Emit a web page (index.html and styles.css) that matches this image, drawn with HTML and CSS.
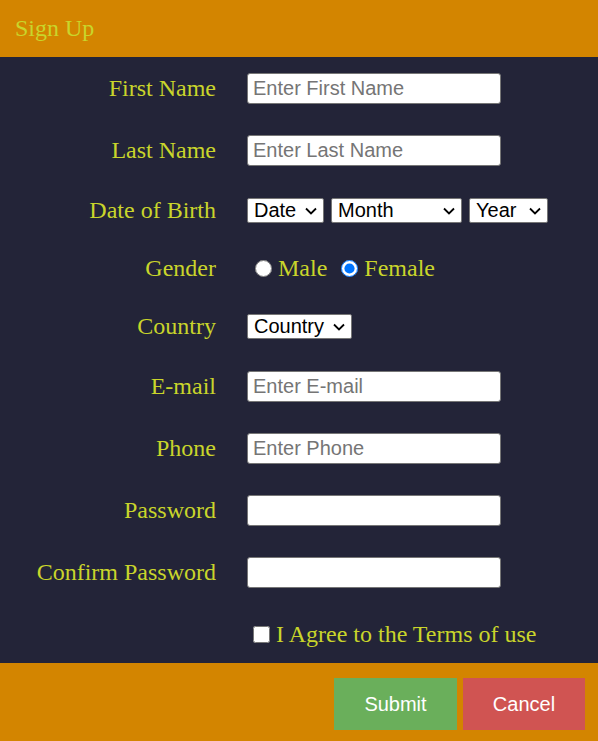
FILE: index.html
```html
<!DOCTYPE html>
<html>
<head>
<meta charset="utf-8">
<link rel="stylesheet" href="styles.css">
</head>
<body>
<header class="top">Sign Up</header>
<form class="form">
  <div class="row">
    <label class="label">First Name</label>
    <div class="field"><input class="text" type="text" placeholder="Enter First Name"></div>
  </div>
  <div class="row">
    <label class="label">Last Name</label>
    <div class="field"><input class="text" type="text" placeholder="Enter Last Name"></div>
  </div>
  <div class="row">
    <label class="label">Date of Birth</label>
    <div class="field selects">
      <span class="selwrap">
        <select class="sel sel-date"><option>Date</option><option>1</option><option>2</option><option>3</option><option>10</option><option>31</option></select>
        <svg class="chev" viewBox="0 0 12 8" width="12" height="8"><path d="M1 1.5 L6 6.5 L11 1.5" /></svg>
      </span>
      <span class="selwrap">
        <select class="sel sel-month"><option>Month</option><option>January</option><option>February</option><option>March</option><option>September</option><option>December</option></select>
        <svg class="chev" viewBox="0 0 12 8" width="12" height="8"><path d="M1 1.5 L6 6.5 L11 1.5" /></svg>
      </span>
      <span class="selwrap">
        <select class="sel sel-year"><option>Year</option><option>2000</option><option>2001</option><option>2002</option></select>
        <svg class="chev" viewBox="0 0 12 8" width="12" height="8"><path d="M1 1.5 L6 6.5 L11 1.5" /></svg>
      </span>
    </div>
  </div>
  <div class="row">
    <label class="label">Gender</label>
    <div class="field radios">
      <label class="opt"><input class="radio" type="radio" name="g">Male</label>
      <label class="opt opt-second"><input class="radio" type="radio" name="g" checked>Female</label>
    </div>
  </div>
  <div class="row">
    <label class="label">Country</label>
    <div class="field">
      <span class="selwrap">
        <select class="sel sel-country"><option>Country</option><option>India</option><option>USA</option><option>UK</option></select>
        <svg class="chev" viewBox="0 0 12 8" width="12" height="8"><path d="M1 1.5 L6 6.5 L11 1.5" /></svg>
      </span>
    </div>
  </div>
  <div class="row">
    <label class="label">E-mail</label>
    <div class="field"><input class="text" type="text" placeholder="Enter E-mail"></div>
  </div>
  <div class="row">
    <label class="label">Phone</label>
    <div class="field"><input class="text" type="text" placeholder="Enter Phone"></div>
  </div>
  <div class="row">
    <label class="label">Password</label>
    <div class="field"><input class="text" type="password"></div>
  </div>
  <div class="row">
    <label class="label">Confirm Password</label>
    <div class="field"><input class="text" type="password"></div>
  </div>
  <div class="row row-terms">
    <span class="label"></span>
    <div class="field"><label class="opt terms"><input class="check" type="checkbox">I Agree to the Terms of use</label></div>
  </div>
</form>
<footer class="bottom">
  <button class="btn btn-submit" type="button">Submit</button>
  <button class="btn btn-cancel" type="button">Cancel</button>
</footer>
</body>
</html>
```
FILE: styles.css
```css
html, body {
  margin: 0;
  padding: 0;
}
body {
  background: #232438;
  font-family: "Liberation Serif", "Times New Roman", serif;
  color: #c9d52b;
  width: 598px;
}
.top {
  height: 57px;
  background: #d38500;
  display: flex;
  align-items: center;
  padding-left: 15px;
  font-size: 24px;
  color: #c9d52b;
}
.form {
  display: flex;
  flex-direction: column;
}
.row {
  display: flex;
  align-items: center;
  padding: 15.5px 0;
}
.row-terms {
  padding: 17.5px 0 15.5px;
}
.label {
  width: 216px;
  flex: none;
  text-align: right;
  font-size: 24px;
}
.field {
  margin-left: 31px;
  display: flex;
  align-items: center;
}
.text {
  box-sizing: border-box;
  width: 254px;
  height: 31px;
  border: 1px solid #767676;
  border-radius: 3px;
  padding: 0 5px;
  font-family: "Liberation Sans", Arial, sans-serif;
  font-size: 20px;
  background: #fff;
  color: #000;
  margin: 0;
}
.text::placeholder {
  color: #757575;
}
.selects {
  gap: 7px;
}
.selwrap {
  position: relative;
  display: inline-flex;
}
.sel {
  appearance: none;
  -webkit-appearance: none;
  box-sizing: border-box;
  font-family: "Liberation Sans", Arial, sans-serif;
  font-size: 20px;
  margin: 0;
  height: 25px;
  padding: 0 0 0 6px;
  border: 1px solid #767676;
  border-radius: 2px;
  background: #fff;
  color: #000;
  line-height: 23px;
}
.sel-date { width: 77px; }
.sel-month { width: 131px; }
.sel-year { width: 79px; }
.sel-country { width: 105px; }
.chev {
  position: absolute;
  right: 7px;
  top: 9px;
  pointer-events: none;
}
.chev path {
  fill: none;
  stroke: #000;
  stroke-width: 1.8;
}
.opt {
  display: flex;
  align-items: center;
  font-size: 24px;
}
.radio {
  width: 17px;
  height: 17px;
  margin: 0 6px 0 8px;
}
.opt-second .radio {
  margin-left: 14px;
}
.check {
  width: 17px;
  height: 17px;
  margin: 0 6px 0 6px;
}
.bottom {
  height: 78px;
  box-sizing: border-box;
  background: #d38500;
  display: flex;
  justify-content: flex-end;
  align-items: flex-start;
  gap: 6px;
  padding: 15px 13px 0 0;
}
.btn {
  height: 52px;
  width: 123px;
  border: none;
  color: #fff;
  font-family: "Liberation Sans", Arial, sans-serif;
  font-size: 20px;
  margin: 0;
}
.btn-submit {
  background: #6aaf5b;
}
.btn-cancel {
  width: 122px;
  background: #d05452;
}
```
